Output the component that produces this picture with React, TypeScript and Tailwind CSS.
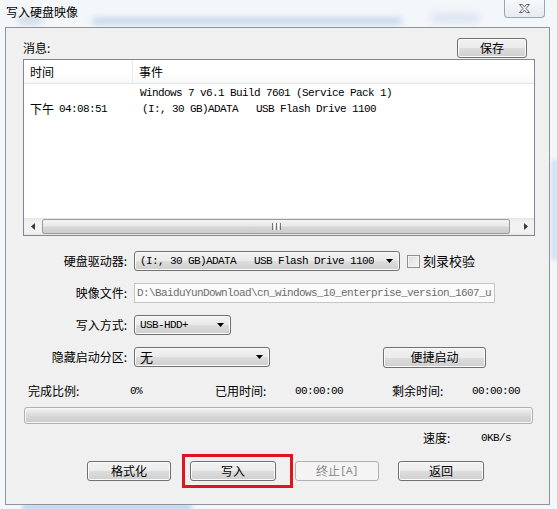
import React from 'react';

const face =
  "rounded-[3px] border border-[#707070] bg-[linear-gradient(to_bottom,#f2f2f2_0%,#ebebeb_50%,#dddddd_51%,#cfcfcf_100%)] shadow-[inset_0_0_0_1px_#fbfbfb] text-black";
const btn = `flex items-center justify-center ${face}`;

const mono = "font-['Liberation_Mono','Noto_Sans_CJK_SC',monospace] text-[11px] tracking-[-0.6px]";

function Arrow() {
  return (
    <svg width="7" height="4" viewBox="0 0 7 4" className="shrink-0">
      <path d="M0 0H7L3.5 4Z" fill="#000" />
    </svg>
  );
}

function Combo({ width, children }: { width: string; children: React.ReactNode }) {
  return (
    <div className={`flex items-center justify-between ${face} ${width} h-[20px] pl-[5px] pr-[6px]`}>
      <span className="whitespace-nowrap overflow-hidden flex items-center h-[18px] leading-[18px]">{children}</span>
      <Arrow />
    </div>
  );
}

function Row({ label, children }: { label: string; children: React.ReactNode }) {
  return (
    <div className="flex items-center h-[20px]">
      <span className="w-[122px] text-right pr-[1px] whitespace-nowrap">{label}</span>
      <div className="ml-[6px] flex items-center">{children}</div>
    </div>
  );
}

export default function App() {
  return (
    <div className="relative w-[557px] h-[509px] overflow-hidden bg-[#f4f7fa] text-[12px] leading-[14px] text-black font-['Noto_Sans_CJK_SC','Noto_Sans',sans-serif]">
      {/* blurred glass behind the frame */}
      <div className="absolute top-[18px] left-[92px] w-[310px] h-[6px] rounded-full bg-[#bccfe9] blur-[3px]" />
      <div className="absolute top-[17px] left-[18px] w-[24px] h-[7px] rounded-full bg-[#c9d4e6] blur-[3px]" />
      <div className="absolute top-[14px] left-[430px] w-[50px] h-[8px] rounded-full bg-[#d5e0ef] blur-[4px]" />
      <div className="absolute bottom-[0px] left-[22px] w-[170px] h-[4px] rounded-full bg-[#a9c6ea] blur-[2px]" />
      <div className="absolute top-[160px] right-[0px] w-[5px] h-[100px] bg-[#c9dbee] blur-[2px]" />

      <div className="h-[27px] pl-[6px] pt-[5px] leading-[14px] relative">写入硬盘映像</div>

      <div className="absolute top-0 right-[12px] w-[41px] h-[18px] rounded-b-[4px] border border-t-0 border-[#9aa6b4] bg-[linear-gradient(to_bottom,#f7f9fb,#e6ebf1)] flex items-center justify-center">
        <svg width="11" height="9" viewBox="0 0 11 9">
          <polygon
            points="0.5,0.5 3.5,0.5 5.5,3 7.5,0.5 10.5,0.5 7,4.5 10.5,8.5 7.5,8.5 5.5,6 3.5,8.5 0.5,8.5 4,4.5"
            fill="#f5f7fa"
            stroke="#5d6877"
            strokeWidth="1"
            strokeLinejoin="round"
          />
        </svg>
      </div>

      <div className="relative ml-[5px] w-[545px] h-[478px] border border-[#8e949b] bg-[#f0f0f0] flex flex-col">
        <div className="mt-[10px] h-[20px] flex items-center justify-between pl-[17px] pr-[22px]">
          <span>消息:</span>
          <button className={`${btn} w-[70px] h-[20px]`}>保存</button>
        </div>

        <div className="mt-[1px] ml-[17px] w-[512px] h-[177px] border border-[#828790] bg-white flex flex-col">
          <div className="h-[24px] shrink-0 flex items-center border-b border-[#e3e3e3] bg-[linear-gradient(to_bottom,#ffffff,#ffffff_60%,#f6f7f8)]">
            <div className="w-[109px] h-full flex items-center pl-[6px] border-r border-[#e8e8e8]">时间</div>
            <div className="pl-[6px]">事件</div>
          </div>
          <div className="pt-[1px]">
            <div className="h-[16px] flex items-center">
              <div className="w-[109px]" />
              <span className={`pl-[7px] ${mono} whitespace-pre`}>Windows 7 v6.1 Build 7601 (Service Pack 1)</span>
            </div>
            <div className="h-[16px] flex items-center">
              <div className="w-[109px] pl-[6px] flex items-center whitespace-nowrap">
                <span>下午</span>
                <span className={`ml-[5px] ${mono}`}>04:08:51</span>
              </div>
              <span className={`pl-[9px] ${mono} whitespace-pre`}>(I:, 30 GB)ADATA   USB Flash Drive 1100</span>
            </div>
          </div>
          <div className="flex-1" />
          <div className="h-[17px] shrink-0 flex items-center bg-[linear-gradient(to_bottom,#e5e5e5,#f2f2f2_20%,#f2f2f2_80%,#e8e8e8)]">
            <div className="w-[17px] h-full flex items-center justify-center">
              <svg width="4" height="7" viewBox="0 0 4 7">
                <path d="M4 0V7L0 3.5Z" fill="#3a3a3a" />
              </svg>
            </div>
            <div className="ml-[1px] w-[468px] h-[15px] rounded-[2px] border border-[#9b9b9b] bg-[linear-gradient(to_bottom,#f4f4f4,#e8e8e8_45%,#d6d6d6_55%,#cdcdcd)] flex items-center justify-center gap-[1px]">
              <span className="w-[1px] h-[7px] bg-[#777]" />
              <span className="w-[1px] h-[7px] bg-[#fff]" />
              <span className="w-[1px] h-[7px] bg-[#777]" />
              <span className="w-[1px] h-[7px] bg-[#fff]" />
              <span className="w-[1px] h-[7px] bg-[#777]" />
            </div>
            <div className="flex-1" />
            <div className="w-[17px] h-full flex items-center justify-center">
              <svg width="4" height="7" viewBox="0 0 4 7">
                <path d="M0 0V7L4 3.5Z" fill="#3a3a3a" />
              </svg>
            </div>
          </div>
        </div>

        <div className="mt-[15px] flex flex-col gap-[12px]">
          <Row label="硬盘驱动器:">
            <Combo width="w-[266px]">
              <span className={`${mono} whitespace-pre`}>(I:, 30 GB)ADATA   USB Flash Drive 1100</span>
            </Combo>
            <span className="ml-[7px] w-[13px] h-[13px] border border-[#8f8f8f] bg-[linear-gradient(135deg,#dcdcdc,#f7f7f7)] shadow-[inset_0_0_0_1px_#f4f4f4]" />
            <span className="ml-[3px] text-[13px]">刻录校验</span>
          </Row>
          <Row label="映像文件:">
            <div className="w-[361px] h-[20px] border border-[#c5c5c5] bg-[#fbfbfb] flex items-center pl-[2px] overflow-hidden">
              <span className={`${mono} text-[#6d6d6d] whitespace-nowrap`}>D:\BaiduYunDownload\cn_windows_10_enterprise_version_1607_u</span>
            </div>
          </Row>
          <Row label="写入方式:">
            <Combo width="w-[97px]">
              <span className={mono}>USB-HDD+</span>
            </Combo>
          </Row>
          <Row label="隐藏启动分区:">
            <Combo width="w-[136px]">
              <span className="text-[13px]">无</span>
            </Combo>
            <button className={`${btn} ml-[113px] w-[103px] h-[21px]`}>便捷启动</button>
          </Row>
        </div>

        <div className="mt-[17px] h-[14px] flex items-center pl-[22px] whitespace-nowrap">
          <span className="w-[102px]">完成比例:</span>
          <span className={`w-[85px] ${mono}`}>0%</span>
          <span className="w-[80px]">已用时间:</span>
          <span className={`w-[97px] ${mono}`}>00:00:00</span>
          <span className="w-[80px]">剩余时间:</span>
          <span className={mono}>00:00:00</span>
        </div>

        <div className="mt-[9px] ml-[18px] w-[509px] h-[17px] rounded-[3px] border border-[#b0b0b0] bg-[linear-gradient(to_bottom,#f3f3f3,#e3e3e3_30%,#d5d5d5_60%,#cbcbcb)] shadow-[inset_0_0_0_1px_#f6f6f6]" />

        <div className="mt-[7px] h-[14px] flex items-center pl-[417px] whitespace-nowrap">
          <span className="w-[58px]">速度:</span>
          <span className={mono}>0KB/s</span>
        </div>

        <div className="mt-[16px] h-[20px] flex items-center pl-[81px] gap-[19px]">
          <button className={`${btn} w-[84px] h-[20px]`}>格式化</button>
          <div className="relative">
            <button className={`${btn} w-[86px] h-[20px]`}>写入</button>
            <span className="absolute -left-[8px] -right-[17px] -top-[7px] -bottom-[7px] border-[3px] border-[#e0141b]" />
          </div>
          <button className="flex items-center justify-center w-[84px] h-[20px] rounded-[3px] border border-[#adb2b5] bg-[#f4f4f4] text-[#8a8a8a]">
            <span>终止</span>
            <span className={mono}>[A]</span>
          </button>
          <button className={`${btn} w-[86px] h-[20px]`}>返回</button>
        </div>
      </div>
    </div>
  );
}
